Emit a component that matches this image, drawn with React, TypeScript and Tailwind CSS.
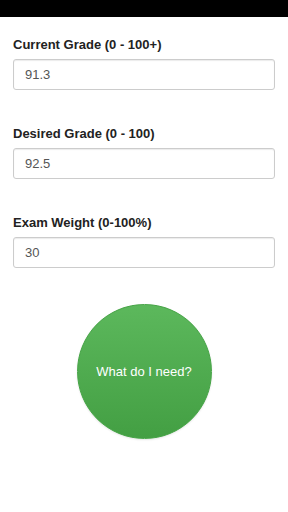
import { FC } from "react";

const fields = [
  { label: "Current Grade (0 - 100+)", value: "91.3" },
  { label: "Desired Grade (0 - 100)", value: "92.5" },
  { label: "Exam Weight (0-100%)", value: "30" },
];

const App: FC = () => {
  return (
    <div className="w-[288px] h-[512px] bg-white font-['Liberation_Sans',Arial,sans-serif] overflow-hidden">
      <div className="h-[17px] bg-black" />
      <div className="px-[13px] pt-[20px] flex flex-col gap-[36px]">
        {fields.map((f) => (
          <div key={f.label} className="flex flex-col">
            <label className="text-[13px] leading-[16px] font-bold text-[#222] mb-[6px]">
              {f.label}
            </label>
            <input
              defaultValue={f.value}
              className="h-[31px] w-[262px] rounded-[3px] border border-[#ccc] bg-white px-[11px] text-[13px] text-[#555] shadow-[inset_0_1px_1px_rgba(0,0,0,0.08)] outline-none"
            />
          </div>
        ))}
      </div>
      <div className="flex justify-center mt-[36px]">
        <button className="w-[135px] h-[135px] rounded-full border border-[#47a447] bg-gradient-to-b from-[#5cb85c] to-[#439f43] text-white text-[13px] shadow-[0_1px_2px_rgba(0,0,0,0.1)]">
          What do I need?
        </button>
      </div>
    </div>
  );
};

export default App;
